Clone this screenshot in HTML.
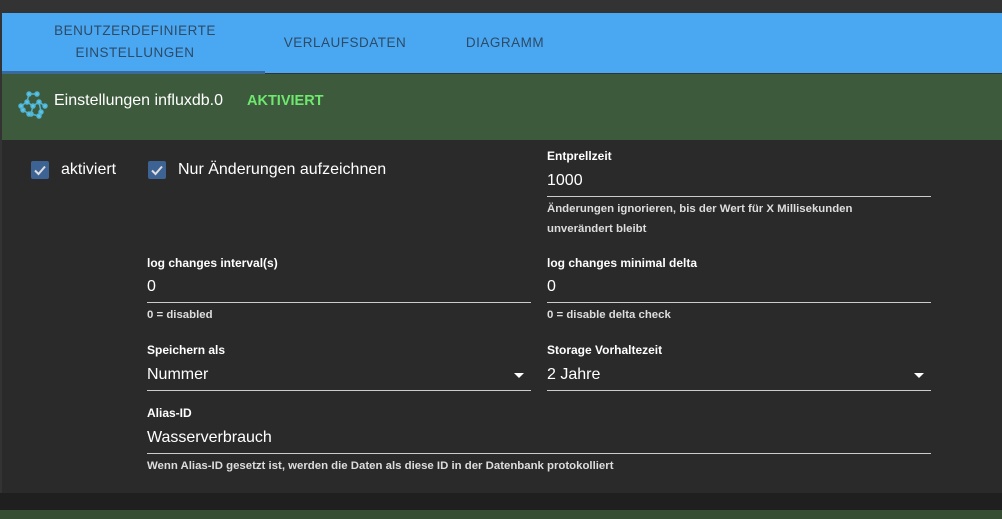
<!DOCTYPE html>
<html><head><style>
*{margin:0;padding:0;box-sizing:border-box}
body{width:1002px;height:519px;overflow:hidden;background:#333;font-family:"Liberation Sans",sans-serif;position:relative}
.a{position:absolute}
.tabs{left:2px;top:13px;width:1000px;height:60px;background:#4aa8f2}
.tab{font-size:13.5px;color:#2d4a66;letter-spacing:.5px;text-align:center;line-height:22px}
.hdr{left:2px;top:74px;width:1000px;height:66px;background:#3d5a3c}
.body{left:2px;top:140px;width:1000px;height:353px;background:#2a2a2a}
.lbl{font-size:12px;color:#fff;font-weight:bold}
.val{font-size:16px;color:#fff}
.line{height:1px;background:#ccc}
.help{font-size:11.4px;color:#ddd;font-weight:bold;line-height:20px}
.cb{width:18px;height:18px;background:#3d6394;border-radius:2px}
</style></head><body>
<div class="a tabs"></div>
<div class="a tab" style="left:18px;top:20px;width:234px">BENUTZERDEFINIERTE<br>EINSTELLUNGEN</div>
<div class="a tab" style="left:265px;top:32px;width:160px">VERLAUFSDATEN</div>
<div class="a tab" style="left:440px;top:32px;width:130px">DIAGRAMM</div>
<div class="a" style="left:2px;top:71px;width:263px;height:3px;background:#3a6a9a"></div>
<div class="a hdr"></div>
<svg class="a" style="left:17px;top:88px" width="32" height="34" viewBox="0 0 32 34"><g stroke="#4fb4d6" stroke-width="1.5" fill="#5cc4e6"><path d="M4 18L10 14L16 18L22 14L28 18M10 14L12 6L20 6M16 18L14 26L22 28M22 14L24 24M6 22L12 26" fill="none"/><circle cx="4" cy="18" r="2"/><circle cx="10" cy="14" r="2"/><circle cx="16" cy="18" r="2"/><circle cx="22" cy="14" r="2"/><circle cx="28" cy="18" r="2"/><circle cx="12" cy="6" r="2"/><circle cx="20" cy="6" r="2"/><circle cx="14" cy="26" r="2"/><circle cx="22" cy="28" r="2"/><circle cx="24" cy="24" r="2"/><circle cx="6" cy="22" r="2"/><circle cx="12" cy="26" r="2"/></g></svg>
<div class="a" style="left:54px;top:92px;font-size:16px;color:#fff">Einstellungen influxdb.0</div>
<div class="a" style="left:247px;top:93px;font-size:14.5px;color:#6fe86f;font-weight:bold">AKTIVIERT</div>
<div class="a body"></div>
<div class="a" style="left:0;top:493px;width:1002px;height:17px;background:#1f1f1f"></div>
<div class="a" style="left:0;top:510px;width:1002px;height:9px;background:#364d33"></div>
<div class="a cb" style="left:31px;top:161px"></div>
<svg class="a" style="left:31px;top:161px" width="18" height="18"><path d="M4 9.5L7.5 13L14 5.5" stroke="#ddd" stroke-width="2" fill="none"/></svg>
<div class="a" style="left:61px;top:161px;font-size:16px;color:#fff">aktiviert</div>
<div class="a cb" style="left:148px;top:161px"></div>
<svg class="a" style="left:148px;top:161px" width="18" height="18"><path d="M4 9.5L7.5 13L14 5.5" stroke="#ddd" stroke-width="2" fill="none"/></svg>
<div class="a" style="left:178px;top:161px;font-size:16px;color:#fff">Nur Änderungen aufzeichnen</div>

<div class="a lbl" style="left:547px;top:149px">Entprellzeit</div>
<div class="a val" style="left:547px;top:172px">1000</div>
<div class="a line" style="left:547px;top:196px;width:384px"></div>
<div class="a help" style="left:547px;top:199px">Änderungen ignorieren, bis der Wert für X Millisekunden<br>unverändert bleibt</div>

<div class="a lbl" style="left:147px;top:256px">log changes interval(s)</div>
<div class="a val" style="left:147px;top:278px">0</div>
<div class="a line" style="left:147px;top:302px;width:384px"></div>
<div class="a help" style="left:147px;top:305px">0 = disabled</div>
<div class="a lbl" style="left:547px;top:256px">log changes minimal delta</div>
<div class="a val" style="left:547px;top:278px">0</div>
<div class="a line" style="left:547px;top:302px;width:384px"></div>
<div class="a help" style="left:547px;top:305px">0 = disable delta check</div>

<div class="a lbl" style="left:147px;top:343px">Speichern als</div>
<div class="a val" style="left:147px;top:366px">Nummer</div>
<div class="a" style="left:514px;top:373px;border:5px solid transparent;border-top-color:#fff"></div>
<div class="a line" style="left:147px;top:390px;width:384px"></div>
<div class="a lbl" style="left:547px;top:343px">Storage Vorhaltezeit</div>
<div class="a val" style="left:547px;top:366px">2 Jahre</div>
<div class="a" style="left:914px;top:373px;border:5px solid transparent;border-top-color:#fff"></div>
<div class="a line" style="left:547px;top:390px;width:384px"></div>

<div class="a lbl" style="left:147px;top:406px">Alias-ID</div>
<div class="a val" style="left:147px;top:429px">Wasserverbrauch</div>
<div class="a line" style="left:147px;top:453px;width:784px"></div>
<div class="a help" style="left:147px;top:456px">Wenn Alias-ID gesetzt ist, werden die Daten als diese ID in der Datenbank protokolliert</div>
</body></html>
